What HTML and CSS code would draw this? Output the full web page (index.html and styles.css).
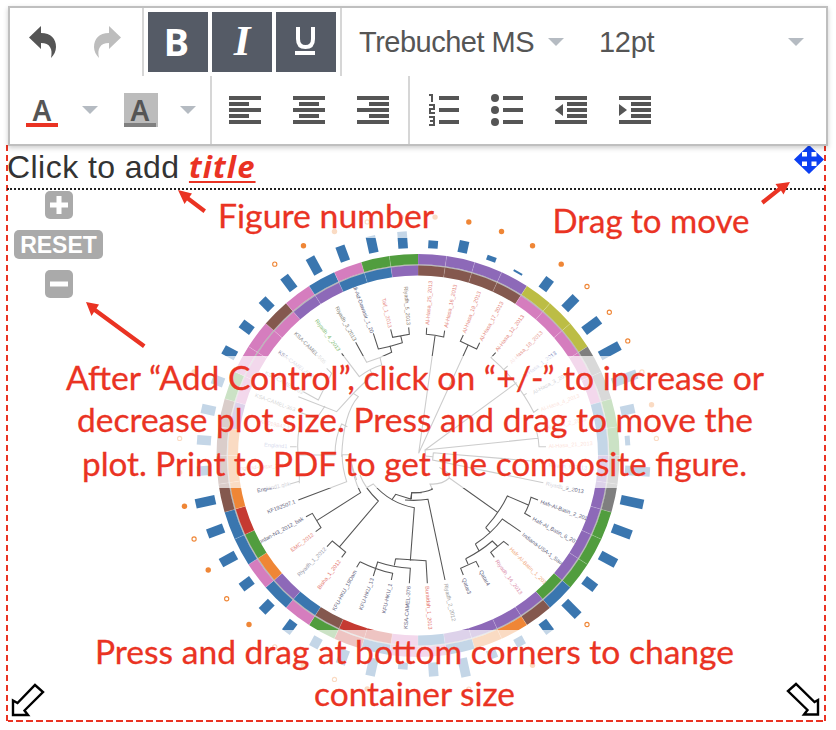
FILE: index.html
```html
<!DOCTYPE html>
<html lang="en">
<head>
<meta charset="utf-8">
<title>Figure editor</title>
<link rel="stylesheet" href="styles.css">
</head>
<body>
<header class="toolbar">
  <div class="row">
    <div class="group history">
      <svg class="arrow" viewBox="0 0 27 32"><path d="M12 0V7C22 7 27 13 27 21C27 25 25 29 22 32C24 23 21 17 12 17V23L0 11.500Z"/></svg>
      <svg class="arrow faded" viewBox="0 0 27 32"><path d="M15 0V7C5 7 0 13 0 21C0 25 2 29 5 32C3 23 6 17 15 17V23L27 11.500Z"/></svg>
    </div>
    <div class="group styles">
      <button class="on bold">B</button>
      <button class="on ital">I</button>
      <button class="on"><svg width="22" height="30" viewBox="0 0 22 30"><path d="M3 0V12Q3 20 10.500 20T18 12V0" fill="none" stroke="#fff" stroke-width="4"/><path d="M0 24H20V28H0Z" fill="#fff"/></svg></button>
    </div>
    <div class="pick font"><span>Trebuchet MS</span><i class="caret"></i></div>
    <div class="pick size"><span>12pt</span><i class="caret"></i></div>
  </div>
  <div class="row">
    <div class="group colors">
      <div class="ink"><b>A</b></div><i class="caret"></i>
      <div class="ink fill"><b>A</b></div><i class="caret"></i>
    </div>
    <div class="group icons">
      <svg viewBox="0 0 32 32"><path d="M0 2H32V6H0ZM0 8H20V12H0ZM0 14H32V18H0ZM0 20H20V24H0ZM0 26H32V30H0Z"/></svg>
      <svg viewBox="0 0 32 32"><path d="M0 2H32V6H0ZM6 8H26V12H6ZM0 14H32V18H0ZM6 20H26V24H6ZM0 26H32V30H0Z"/></svg>
      <svg viewBox="0 0 32 32"><path d="M0 2H32V6H0ZM12 8H32V12H12ZM0 14H32V18H0ZM12 20H32V24H12ZM0 26H32V30H0Z"/></svg>
    </div>
    <div class="group icons last">
      <svg viewBox="0 0 32 32"><path d="M12 2H32V6H12ZM12 14H32V18H12ZM12 26H32V30H12Z"/><path d="M2 1H5V8M2 11H7V15H3V19H8M2 23H7V31H2M3 27H7" fill="none" stroke="#555" stroke-width="2"/></svg>
      <svg viewBox="0 0 32 32"><path d="M12 2H32V6H12ZM12 14H32V18H12ZM12 26H32V30H12Z"/><circle cx="4" cy="4" r="4"/><circle cx="4" cy="16" r="4"/><circle cx="4" cy="28" r="4"/></svg>
      <svg viewBox="0 0 32 32"><path d="M0 2H32V6H0ZM12 8H32V12H12ZM12 14H32V18H12ZM12 20H32V24H12ZM0 26H32V30H0ZM0 16L8 10V22Z"/></svg>
      <svg viewBox="0 0 32 32"><path d="M0 2H32V6H0ZM12 8H32V12H12ZM12 14H32V18H12ZM12 20H32V24H12ZM0 26H32V30H0ZM8 16L0 10V22Z"/></svg>
    </div>
  </div>
</header>
<main class="figure">
  <h1 class="caption">Click to add <em>title</em></h1>
  <div class="controls">
    <button class="zoom"><svg viewBox="0 0 28 28"><path d="M5 14H23M14 5V23"/></svg></button>
    <button class="reset">RESET</button>
    <button class="zoom"><svg viewBox="0 0 28 28"><path d="M5 14H23"/></svg></button>
  </div>
</main>
<svg class="plot" width="836" height="730" viewBox="0 0 836 730">
  <g id="labels"></g>
  <g class="tree">
    <g transform="translate(410 200) scale(.33333)"><path d="M50 383L49 403Q75 405 101 411L104 392M75 408L26 760M160 405L151 424L200 447L209 428M174 436L26 760M257 458L243 473Q275 500 305 535M293 498L282 508M350 580L340 587M385 627L370 638M305 535Q345 585 372 638M320 548L45 750M408 740L387 740Q386 716 380 694M383 715L45 750L47 768L68 770M70 758L68 780L400 848M70 758L390 785M88 802L115 820L118 834Q95 855 60 852L67 868Q40 880 5 878L4 898"/></g>
    <g transform="translate(410 480) scale(.33333)"><path d="M118 -6L263 97M227 143Q270 95 292 48L355 75M384 60L363 52Q357 78 344 100L362 110M227 143L240 157M196 192Q245 160 277 117L332 155M196 192L207 212M167 236Q210 215 247 183L262 198M296 196L281 184Q262 200 242 217L253 232M167 236L174 252M160 285L152 265L198 244L207 262M-15 60Q20 63 54 58L105 300"/></g>
    <g transform="translate(170 480) scale(.33333)"><path d="M592 22L610 12Q660 70 733 83L721 242M665 60L677 43L722 57L725 38L755 38M677 236L768 242L772 310M677 236L673 256M718 310L721 265Q670 262 623 246L610 288M570 245Q620 270 668 280L664 300M570 245L560 262M509 200L625 63Q585 25 570 -15M471 200L487 183L527 216L515 232M440 122L572 38Q550 0 540 -76M408 110L427 100L453 143L437 155M385 60L530 5Q515 -45 517 -76M360 12L388 4"/></g>
    <g transform="translate(170 200) scale(.33333)"><path d="M662 388L668 412L718 403L716 382M692 407L697 428Q660 440 625 447L610 400M660 437L665 457Q630 475 590 487L557 427M630 472L635 495Q600 505 568 530L515 460M600 508L607 525Q565 565 550 580L565 590Q520 640 515 770M550 580L500 635L385 590M470 505L485 520L445 600L400 575M465 618L440 655L385 635M388 850L388 795Q378 740 388 680M360 740H380M383 765H495Q495 710 515 672L532 680M517 764H540Q542 790 560 840"/></g>
  </g>
  <circle cx="418" cy="455.500" r="190.500" fill="none" stroke="#bbb" stroke-width="2"/>
  <g id="rings"></g>
  <g id="bars"></g>
  <g fill="#fff" fill-opacity=".7"><path d="M212 190H442V238H212ZM50 356H780V488H50ZM80 630H750V718H80Z"/></g>
  <g class="notes">
    <text x="218" y="227.500" textLength="216" lengthAdjust="spacingAndGlyphs">Figure number</text>
    <text x="552.500" y="233" textLength="197" lengthAdjust="spacingAndGlyphs">Drag to move</text>
    <text x="66" y="389.500" textLength="698" lengthAdjust="spacingAndGlyphs">After “Add Control”, click on “+/-” to increase or</text>
    <text x="77" y="432" textLength="676" lengthAdjust="spacingAndGlyphs">decrease plot size. Press and drag to move the</text>
    <text x="82" y="476" textLength="665" lengthAdjust="spacingAndGlyphs">plot. Print to PDF to get the composite figure.</text>
    <text x="95" y="664" textLength="639" lengthAdjust="spacingAndGlyphs">Press and drag at bottom corners to change</text>
    <text x="314" y="706" textLength="201" lengthAdjust="spacingAndGlyphs">container size</text>
  </g>
  <g fill="#ea3323">
    <path d="M178 190L192 193.500L189.500 197L206 209.500L203.500 213L187 200.500L184.500 204Z"/>
    <path d="M86 302L99 304.500L96.500 308.500L145.500 344.500L143 348L94 312L91.500 316Z"/>
    <path d="M790 182L783.500 194.500L781 190.500L763.500 204.500L761 201L778 187.500L775.500 184Z"/>
  </g>
  <path d="M809 145L824 159.500L809 174L794 159.500Z" fill="#0c3ff2"/>
  <g fill="#fff"><path d="M802 152H807V156.500H802ZM811.500 152H816.500V156.500H811.500ZM802 161.500H807V166H802ZM811.500 161.500H816.500V166H811.500Z"/></g>
  <g fill="#fff" stroke="#000" stroke-width="2.400"><path d="M13 700.500V715H28L24.500 710.500L43 692L35 685L17.500 703Z"/><path d="M818 700V714.500H804L807.500 710L788 691L796 684L814.500 702Z"/></g>
</svg>
<script src="plot.js"></script>
</body>
</html>
```
FILE: styles.css
```css
* { box-sizing: border-box; }
body { margin: 0; background: #fff; font-family: "Liberation Sans", sans-serif; position: relative; height: 730px; overflow: hidden; }
button { border: 0; padding: 0; margin: 0; font-family: inherit; display: flex; align-items: center; justify-content: center; }
.toolbar { position: relative; top: 6px; z-index: 2; margin: 0 8px; width: 820px; height: 140px; border: 2px solid #bfbfbf; background: #fff; box-shadow: 0 2px 5px rgba(0,0,0,.2); }
.row { display: flex; height: 68px; }
.group { display: flex; align-items: center; border-right: 2px solid #d6d6d6; }
.history { width: 134px; padding-left: 19px; gap: 38px; }
.arrow { width: 27px; height: 32px; fill: #555; }
.faded { fill: #bdbdbd; }
.styles { width: 198px; padding-left: 4px; gap: 4px; }
.on { width: 60px; height: 60px; background: #555b66; color: #fff; }
.bold { font: bold 38px "Noto Sans", sans-serif; padding: 0 3px 2px 0; }
.ital { font: italic bold 43px/54px "Liberation Serif", serif; padding-bottom: 2px; }
.pick { display: flex; align-items: center; color: #555; font-size: 29px; }
.pick span { white-space: nowrap; }
.font { width: 226px; padding-left: 17px; justify-content: space-between; }
.font span { letter-spacing: -.5px; }
.size { flex: 1; padding: 0 22px 0 31px; justify-content: space-between; }
.size span { letter-spacing: -.3px; }
.font .caret { margin-right: 4px; }
.caret { width: 0; height: 0; border: 8px solid transparent; border-top-color: #b5bbc2; border-bottom: 0; }
.colors { width: 202px; padding-left: 16px; }
.ink { width: 32px; height: 34px; border-bottom: 4px solid #ea3323; color: #555; text-align: center; }
.ink b { font: 600 28px/34px "Noto Sans", sans-serif; display: block; }
.ink + .caret { margin-left: 24px; margin-right: 28px; }
.fill { border-color: #808080; background: linear-gradient(#bcbcbc, #bcbcbc); margin-left: -2px; }
.fill { box-shadow: 2px 0 0 #bcbcbc; width: 32px; }
.fill + .caret { margin-right: 0; }
.icons { width: 198px; padding-left: 17px; gap: 32px; fill: #555; }
.icons svg { width: 32px; height: 32px; }
.last { width: auto; border: 0; }
.figure { position: relative; width: 820px; height: 577px; margin: 5px 0 0 6px; padding: 0 2px 2px 1px;
  background:
    repeating-linear-gradient(#ea3323 0 6px, #fff 6px 10px) left / 2px 100% no-repeat,
    repeating-linear-gradient(#ea3323 0 6px, #fff 6px 10px) right / 2px 100% no-repeat,
    repeating-linear-gradient(90deg, #ea3323 0 7px, #fff 7px 10px) bottom / 100% 2px no-repeat; }
.caption { margin: 0; height: 45px; border-bottom: 2px dotted #222; font: 32px/44px "Liberation Sans", sans-serif; color: #333; letter-spacing: .45px; white-space: nowrap; }
.caption em { font: italic bold 31px/40px "Open Sans", sans-serif; color: #ea3323; letter-spacing: 1.1px; text-decoration: underline 2px; text-underline-offset: 3px; }
.controls { width: 89px; margin: 1px 0 0 7px; display: flex; flex-direction: column; align-items: center; gap: 11px; }
.controls button { background: #aaa; color: #fff; border-radius: 5px; }
.zoom, .zoom svg { width: 28px; height: 28px; }
.zoom path { stroke: #fff; stroke-width: 5; }
.controls .reset { width: 89px; height: 29px; padding-top: 2px; font: bold 23px "Liberation Sans", sans-serif; }
.plot { position: absolute; left: 0; top: 0; z-index: 1; pointer-events: none; }
.tree path { fill: none; stroke: #555; stroke-width: 3.2; }
.notes text { font: 33px Lato, sans-serif; fill: #ea3323; stroke: #ea3323; stroke-width: .3; }
#labels text { font: 5.500px "Liberation Sans", sans-serif; opacity: .85; }
```
FILE: plot.js
```js
const CX = 418, CY = 455.5, COUNT = 44, STEP = 360 / COUNT;
const COLORS = { p: '#8d69b8', o: '#bcbd45', g: '#7f7f7f', G: '#519d3e', b: '#3a76af', n: '#84584e', O: '#ef8636', k: '#d57dbe', r: '#c53a32' };
// One letter per leaf, clockwise from the top.
const OUTER = 'ppppoooggGGggGGGbnOObkkbrGkbkbbnnnnGkknkbkGG';
const INNER = 'nnnnkkkkkbbpppppGppppbkrrnbpOGrOOOpkkkkppbbp';
const BARS = [8,12,5,2,13,16,19,22,26,14,5,25,23,20,18,14,19,13,9,9,19,14,7,18,15,11,13,13,13,17,17,20,14,14,14,12,14,13,13,16,18,16,17,17];
const FILLED = [0,1,2,3,4,9,18,23,25,27,29,31,32,35,40,41,43];
const HOLLOW = [5,6,7,8,10,16,20,24,26,28,30,33,39,42];
const LABELS = [
  ['Al-Hasa_25_2013','#e07068'],['Al-Hasa_16_2013','#e07068'],['Al-Hasa_19_2013','#e07068'],['Al-Hasa_17_2013','#e07068'],
  ['Al-Hasa_12_2013','#e07068'],['Al-Hasa_18_2013','#e58a80'],['Al-Hasa_1_2013','#5568b0'],['Al-Hasa_3_2013','#445'],
  ['Al-Hasa_4_2013','#ef8066'],['Al-Hasa_2_2013','#ef8066'],['Al-Hasa_21_2013','#ef8066'],['Riyadh_8_2013','#8d69b8'],
  ['Riyadh_9_2013','#446'],['Hafr-Al-Batin_2_2013','#446'],['Hafr-Al_Batin_6_2013','#446'],['Indiana-USA-1_Saudi','#446'],
  ['Hafr-Al-Batin_1_2013','#ef9a68'],['Riyadh_14_2013','#d67a9c'],['Qatar4','#446'],['Qatar3','#446'],
  ['Riyadh_2_2012','#888'],['Buraidah_1_2013','#df5a50'],['KSA-CAMEL-376','#446'],['KFU-HKU_1','#446'],
  ['KFU-HKU_13','#446'],['KFU-HKU_19Dam','#446'],['Bisha_1_2012','#df5a50'],['Riyadh_1_2012','#889'],
  ['EMC_2012','#df6a60'],['Jordan-N3_2012_bak','#446'],['KF192507.1','#446'],['England1.gbk','#446'],
  ['England-Qatar_2012','#df5a50'],['England1','#5568b0'],['KC019842.1','#df5a50'],['KSA-CAMEL-363','#555'],
  ['KSA-CAMEL-503','#777'],['KSA-CAMEL-502','#779'],['KSA-CAMEL-505','#777'],['Riyadh_4_2013','#6db35c'],
  ['Riyadh_3_2013','#665'],['Wadi-Ad-Dawasir_1_20','#446'],['Taif_1_2013','#e58078'],['Riyadh_5_2013','#765']
];

function point(r, deg) {
  const a = deg * Math.PI / 180;
  return (CX + r * Math.sin(a)).toFixed(2) + ' ' + (CY - r * Math.cos(a)).toFixed(2);
}
function arc(i, inner, outer, color) {
  const a = i * STEP, b = (i + 1) * STEP;
  return `<path d="M${point(inner, a)}L${point(outer, a)}A${outer} ${outer} 0 0 1 ${point(outer, b)}L${point(inner, b)}A${inner} ${inner} 0 0 0 ${point(inner, a)}Z" fill="${color}"/>`;
}

let rings = '', bars = '', labels = '';
for (let i = 0; i < COUNT; i++) {
  const mid = (i + 0.5) * STEP;
  rings += arc(i, 191.3, 201.5, COLORS[OUTER[i]]) + arc(i, 180, 190, COLORS[INNER[i]]);
  rings += `<path d="M${point(180, i * STEP)}L${point(201.5, i * STEP)}" stroke="#fff" stroke-opacity=".3" stroke-width=".6"/>`;
  bars += `<rect x="${CX - 4.8}" y="${CY - 207.5 - BARS[i]}" width="9.6" height="${BARS[i]}" fill="${COLORS.b}" transform="rotate(${mid} ${CX} ${CY})"/>`;
  const [x, y] = point(239, mid).split(' ');
  if (FILLED.includes(i)) bars += `<circle cx="${x}" cy="${y}" r="2.7" fill="${COLORS.O}"/>`;
  if (HOLLOW.includes(i)) bars += `<circle cx="${x}" cy="${y}" r="2.1" fill="none" stroke="${COLORS.O}" stroke-width="1.1"/>`;
  const left = i >= COUNT / 2;
  const turn = left ? mid + 90 : mid - 90;
  labels += `<text transform="translate(${point(131, mid)}) rotate(${turn})" dy="2" text-anchor="${left ? 'end' : 'start'}" fill="${LABELS[i][1]}">${LABELS[i][0]}</text>`;
}
document.getElementById('rings').innerHTML = rings;
document.getElementById('bars').innerHTML = bars;
document.getElementById('labels').innerHTML = labels;
```
